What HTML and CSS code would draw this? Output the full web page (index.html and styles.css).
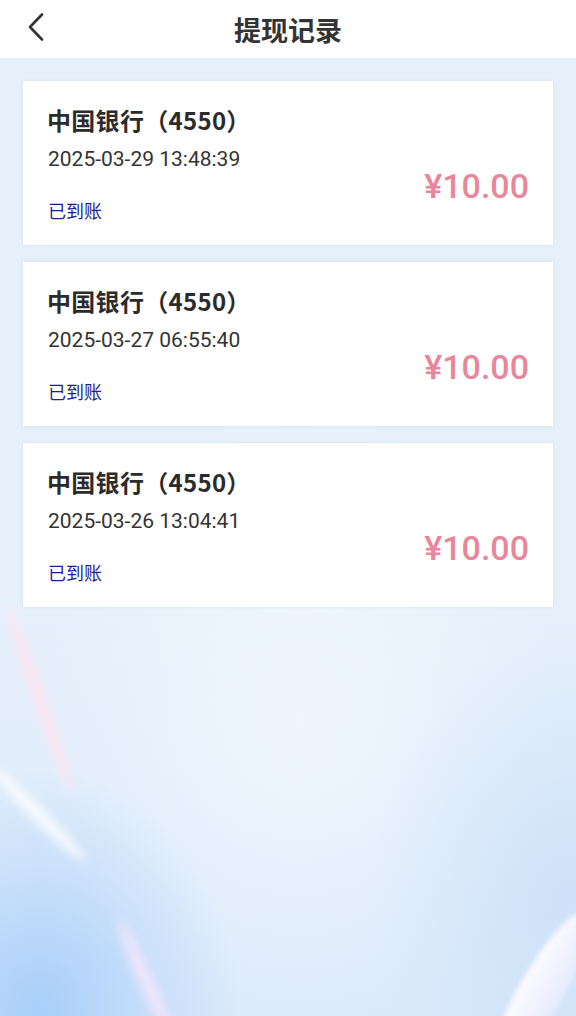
FILE: index.html
```html
<!DOCTYPE html>
<html lang="zh-CN">
<head>
    <meta charset="UTF-8">
    <meta name="viewport" content="width=device-width, initial-scale=1.0">
    <title>提现记录</title>
    <link rel="stylesheet" href="styles.css">
</head>
<body>
    <div class="backdrop">
        <span class="streak pink"></span>
        <span class="streak white"></span>
        <span class="streak violet"></span>
        <span class="streak wedge"></span>
    </div>

    <header class="top-bar">
        <a class="back" href="#">
            <svg width="18" height="28" viewBox="0 0 18 28"><path d="M15 1.5 L3 14 L15 26.5" fill="none" stroke="#333" stroke-width="2.6" stroke-linecap="round" stroke-linejoin="round"/></svg>
        </a>
        <h1>提现记录</h1>
    </header>

    <main class="list">
        <div class="record">
            <div class="info">
                <div class="bank">中国银行（4550）</div>
                <div class="time">2025-03-29 13:48:39</div>
                <div class="status">已到账</div>
            </div>
            <div class="amount">¥10.00</div>
        </div>
        <div class="record">
            <div class="info">
                <div class="bank">中国银行（4550）</div>
                <div class="time">2025-03-27 06:55:40</div>
                <div class="status">已到账</div>
            </div>
            <div class="amount">¥10.00</div>
        </div>
        <div class="record">
            <div class="info">
                <div class="bank">中国银行（4550）</div>
                <div class="time">2025-03-26 13:04:41</div>
                <div class="status">已到账</div>
            </div>
            <div class="amount">¥10.00</div>
        </div>
    </main>
</body>
</html>
```

FILE: styles.css
```css
* { box-sizing: border-box; }
html, body { height: 100%; }
body {
    margin: 0;
    font-family: "Noto Sans CJK SC", "Noto Sans", sans-serif;
    color: #333;
    min-height: 1016px;
    position: relative;
    background:
        radial-gradient(ellipse 200px 240px at 40px 1010px, rgba(165,205,250,0.95), rgba(180,212,250,0.45) 60%, transparent 100%),
        radial-gradient(ellipse 200px 260px at 570px 900px, rgba(200,222,248,0.7), transparent 100%),
        radial-gradient(ellipse 260px 320px at 300px 720px, rgba(242,248,255,0.8), transparent 100%),
        linear-gradient(180deg, #e6f0fa 0%, #e6f0fb 60%, #dbe9fa 100%);
}

/* decorative light streaks behind the list */
.backdrop {
    position: absolute;
    inset: 0;
    overflow: hidden;
    z-index: 0;
    pointer-events: none;
}
.streak {
    position: absolute;
    display: block;
    border-radius: 50%;
}
.pink {
    left: 34px; top: 600px;
    width: 12px; height: 200px;
    background: rgba(255, 228, 240, 0.9);
    transform: rotate(-19deg);
    filter: blur(5px);
}
.white {
    left: 32px; top: 750px;
    width: 14px; height: 130px;
    background: rgba(255, 255, 255, 0.8);
    transform: rotate(-45deg);
    filter: blur(5px);
}
.violet {
    left: 138px; top: 915px;
    width: 16px; height: 130px;
    background: rgba(240, 230, 252, 0.9);
    transform: rotate(-24deg);
    filter: blur(5px);
}
.wedge {
    left: 520px; top: 900px;
    width: 44px; height: 180px;
    background: linear-gradient(90deg, rgba(255,252,255,0.95), rgba(238,238,255,0.7));
    transform: rotate(30deg);
    filter: blur(2px);
}

.top-bar {
    height: 58px;
    background: #fff;
    display: flex;
    align-items: center;
    justify-content: center;
    position: relative;
    z-index: 1;
}
.back {
    position: absolute;
    left: 27px;
    top: 13px;
    display: block;
    line-height: 0;
}
.top-bar h1 {
    margin: 0;
    font-size: 27px;
    font-weight: bold;
    color: #333;
}
.list {
    padding: 23px 23px 0;
    display: flex;
    flex-direction: column;
    gap: 17px;
    position: relative;
    z-index: 1;
}
.record {
    background: #fff;
    height: 164px;
    padding: 24px 24px 0 25px;
    display: flex;
    justify-content: space-between;
    box-shadow: 0 0 3px rgba(180, 200, 230, 0.35);
}
.bank {
    font-size: 24px;
    font-weight: bold;
    line-height: 30px;
    color: #2b2b2b;
    margin-left: -1px;
    letter-spacing: 0.3px;
}
.time {
    margin-top: 11px;
    font-family: Roboto, "Noto Sans CJK SC", sans-serif;
    font-size: 21px;
    line-height: 26px;
    color: #333;
}
.status {
    margin-top: 26px;
    font-size: 18px;
    line-height: 24px;
    color: #1d1d8c;
}
.amount {
    margin-top: 61px;
    font-family: Roboto, "Noto Sans CJK SC", sans-serif;
    font-size: 34px;
    line-height: 40px;
    color: #e8869c;
    font-weight: 500;
}
```
